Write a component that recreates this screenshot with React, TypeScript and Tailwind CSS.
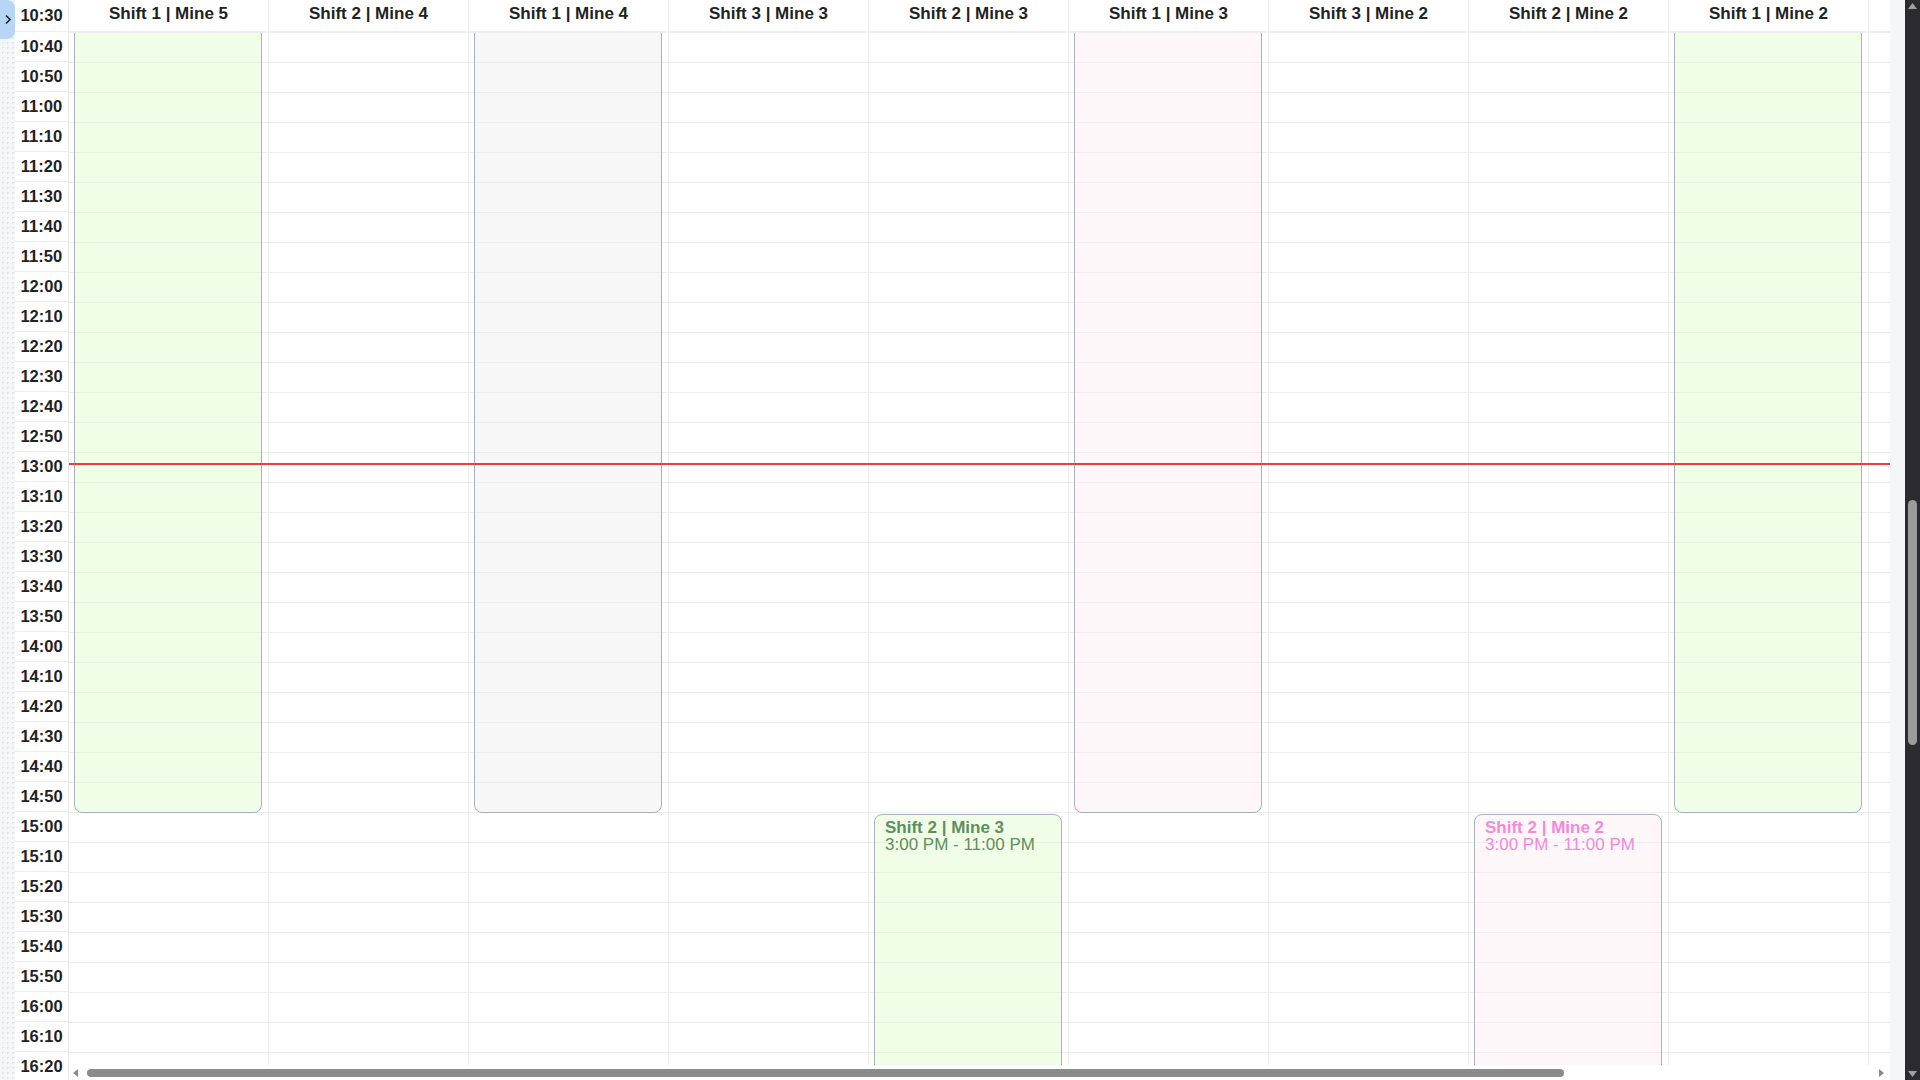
import type { CSSProperties } from 'react'

// Day view starts at 10:40 under the sticky header (10:30 sits in the corner row)
const VIEW_START = 10 * 60 + 40
const PX_PER_MIN = 3

const COLUMNS = [
  'Shift 1 | Mine 5',
  'Shift 2 | Mine 4',
  'Shift 1 | Mine 4',
  'Shift 3 | Mine 3',
  'Shift 2 | Mine 3',
  'Shift 1 | Mine 3',
  'Shift 3 | Mine 2',
  'Shift 2 | Mine 2',
  'Shift 1 | Mine 2',
  'Shift 3 | Mine 1',
  'Shift 2 | Mine 1',
  'Shift 1 | Mine 1',
]

type Tone = 'green' | 'gray' | 'pink'

interface ShiftEvent {
  col: number
  start: number
  end: number
  tone: Tone
  title: string
  range: string
}

const EVENTS: ShiftEvent[] = [
  { col: 0, start: 420, end: 900, tone: 'green', title: 'Shift 1 | Mine 5', range: '7:00 AM - 3:00 PM' },
  { col: 2, start: 420, end: 900, tone: 'gray', title: 'Shift 1 | Mine 4', range: '7:00 AM - 3:00 PM' },
  { col: 5, start: 420, end: 900, tone: 'pink', title: 'Shift 1 | Mine 3', range: '7:00 AM - 3:00 PM' },
  { col: 8, start: 420, end: 900, tone: 'green', title: 'Shift 1 | Mine 2', range: '7:00 AM - 3:00 PM' },
  { col: 4, start: 900, end: 1380, tone: 'green', title: 'Shift 2 | Mine 3', range: '3:00 PM - 11:00 PM' },
  { col: 7, start: 900, end: 1380, tone: 'pink', title: 'Shift 2 | Mine 2', range: '3:00 PM - 11:00 PM' },
]

const TONES: Record<Tone, string> = {
  green: 'bg-[#e1fdd1]/50 text-[#5e8f5c]',
  gray: 'bg-[#efefef]/50 text-[#6b7280]',
  pink: 'bg-[#fbeff3]/50 text-[#f28ad8]',
}

const fmt = (m: number) => `${Math.floor(m / 60)}:${String(m % 60).padStart(2, '0')}`

const TIME_LABELS = Array.from({ length: 36 }, (_, i) => fmt(630 + i * 10))
const BODY_ROWS = 35
const NOW_MIN = 13 * 60 + 3 + 1 / 3

function EventCard({ ev }: { ev: ShiftEvent }) {
  const style: CSSProperties = {
    top: (ev.start - VIEW_START) * PX_PER_MIN + 1,
    height: (ev.end - ev.start) * PX_PER_MIN - 1,
  }
  return (
    <div
      className={`absolute left-[5px] right-[6px] rounded-[8px] border border-[#a9b2bc] px-[10px] pt-[4px] text-[17px] leading-[17px] ${TONES[ev.tone]}`}
      style={style}
    >
      <div className="font-bold">{ev.title}</div>
      <div>{ev.range}</div>
    </div>
  )
}

export default function App() {
  return (
    <div className="flex h-screen w-full overflow-hidden bg-[#f4f6f9] font-['Liberation_Sans',Arial,sans-serif] text-[#222222]">
      {/* Collapsed side panel */}
      <div className="flex w-[15px] shrink-0 flex-col bg-[radial-gradient(#dfe3ea_1px,transparent_1px)] bg-size-[5px_5px]">
        <button className="flex h-[39px] w-[15px] items-center justify-center rounded-r-[8px] bg-[#b7d6f5]">
          <svg width="8" height="11" viewBox="0 0 8 11" fill="none">
            <path d="M2 1.5 L6 5.5 L2 9.5" stroke="#1f2937" strokeWidth="1.7" />
          </svg>
        </button>
      </div>

      {/* Calendar */}
      <div className="flex w-[1875px] shrink-0 bg-white">
        {/* Time gutter */}
        <div className="flex w-[54px] shrink-0 flex-col overflow-hidden border-r border-[#e8e8e8]">
          {TIME_LABELS.map((t, i) => (
            <div
              key={t}
              className={`shrink-0 border-b border-[#ededed] text-center text-[16.5px] font-bold ${
                i === 0 ? 'h-[32px] leading-[31px]' : 'h-[30px] leading-[29px]'
              }`}
            >
              {t}
            </div>
          ))}
        </div>

        <div className="flex min-w-0 flex-1 flex-col overflow-hidden">
          {/* Header */}
          <div className="flex h-[33px] shrink-0 overflow-hidden border-b-2 border-[#efefef]">
            {COLUMNS.map((c) => (
              <div
                key={c}
                className="w-[200px] shrink-0 border-r border-[#ededed] pt-[4px] text-center text-[17px] font-bold leading-[20px]"
              >
                {c}
              </div>
            ))}
          </div>

          {/* Body */}
          <div className="relative min-h-0 flex-1 overflow-hidden">
            <div className="flex">
              {COLUMNS.map((c, ci) => (
                <div key={c} className="relative w-[200px] shrink-0 border-r border-[#ededed]">
                  {Array.from({ length: BODY_ROWS }, (_, r) => (
                    <div key={r} className="h-[30px] border-b border-[#ededed]" />
                  ))}
                  {EVENTS.filter((e) => e.col === ci).map((e) => (
                    <EventCard key={e.title} ev={e} />
                  ))}
                </div>
              ))}
            </div>
            {/* Current time */}
            <div
              className="absolute left-0 right-0 z-10 h-[2px] bg-[#ef3b3b]"
              style={{ top: (NOW_MIN - VIEW_START) * PX_PER_MIN }}
            />
          </div>

          {/* Horizontal scrollbar */}
          <div className="flex h-[15px] shrink-0 items-center gap-[9px] bg-white pl-[4px] pr-[6px]">
            <svg width="5" height="8" viewBox="0 0 5 8">
              <polygon points="5,0 5,8 0,4" fill="#8a8a8a" />
            </svg>
            <div className="flex flex-1 items-center">
              <div className="h-[8px] w-[1477px] rounded-full bg-[#8b8b8b]" />
            </div>
            <svg width="5" height="8" viewBox="0 0 5 8">
              <polygon points="0,0 5,4 0,8" fill="#8a8a8a" />
            </svg>
          </div>
        </div>
      </div>

      <div className="w-[15px] shrink-0" />

      {/* Page scrollbar */}
      <div className="flex w-[15px] shrink-0 flex-col items-center bg-[#2c2b31] py-[3px]">
        <svg width="9" height="6" viewBox="0 0 9 6">
          <polygon points="0,6 4.5,0 9,6" fill="#a3a3a3" />
        </svg>
        <div className="mt-[491px] h-[245px] w-[9px] rounded-full bg-[#9b9b9b]" />
        <div className="flex-1" />
        <svg width="9" height="6" viewBox="0 0 9 6">
          <polygon points="0,0 9,0 4.5,6" fill="#a3a3a3" />
        </svg>
      </div>
    </div>
  )
}
